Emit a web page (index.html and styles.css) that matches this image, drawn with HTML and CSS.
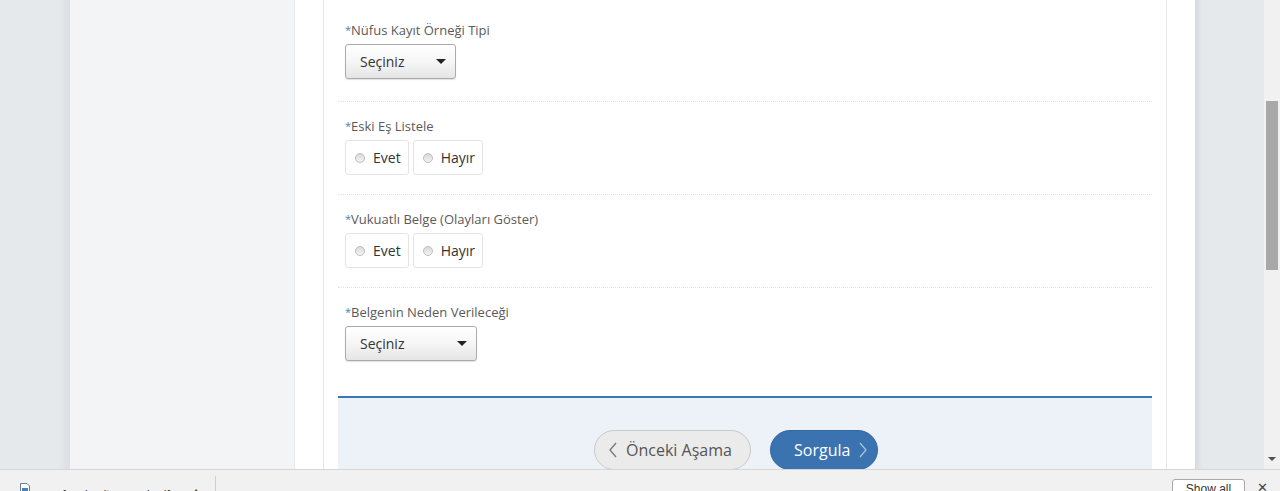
FILE: index.html
```html
<!DOCTYPE html>
<html lang="tr">
<head>
    <meta charset="UTF-8">
    <title>Nüfus Kayıt Örneği - Sorgulama</title>
    <link rel="stylesheet" href="styles.css">
</head>
<body>
    <div class="screen">
        <div class="viewport">
            <div class="page">
                <div class="gutter"></div>
                <div class="sidebar"></div>
                <div class="main">
                    <div class="card">
                        <div class="fields">
                            <div class="field">
                                <label class="field-label"><span class="req">*</span>Nüfus Kayıt Örneği Tipi</label>
                                <div class="select select-short">
                                    <span>Seçiniz</span>
                                    <span class="caret"></span>
                                </div>
                            </div>

                            <div class="field">
                                <label class="field-label"><span class="req">*</span>Eski Eş Listele</label>
                                <div class="radios">
                                    <label class="radio"><span class="dot"></span>Evet</label>
                                    <label class="radio"><span class="dot"></span>Hayır</label>
                                </div>
                            </div>

                            <div class="field">
                                <label class="field-label"><span class="req">*</span>Vukuatlı Belge (Olayları Göster)</label>
                                <div class="radios">
                                    <label class="radio"><span class="dot"></span>Evet</label>
                                    <label class="radio"><span class="dot"></span>Hayır</label>
                                </div>
                            </div>

                            <div class="field field-last">
                                <label class="field-label"><span class="req">*</span>Belgenin Neden Verileceği</label>
                                <div class="select select-long">
                                    <span>Seçiniz</span>
                                    <span class="caret"></span>
                                </div>
                            </div>
                        </div>

                        <div class="actions">
                            <button class="btn btn-back">
                                <svg width="10" height="16" viewBox="0 0 10 16"><path d="M8 1 L2 8 L8 15" fill="none" stroke="#777" stroke-width="1.3"/></svg>
                                Önceki Aşama
                            </button>
                            <button class="btn btn-go">
                                Sorgula
                                <svg width="10" height="16" viewBox="0 0 10 16"><path d="M2 1 L8 8 L2 15" fill="none" stroke="#a9c3e0" stroke-width="1.3"/></svg>
                            </button>
                        </div>
                    </div>
                </div>
                <div class="gutter-right"></div>
            </div>
            <div class="scrollbar">
                <div class="thumb"></div>
                <div class="arrow-down"></div>
            </div>
        </div>

        <div class="downloads">
            <div class="dl-item">
                <svg width="12" height="14" viewBox="0 0 12 14"><path d="M1.5 0.5 H8 L10.5 3 V13.5 H1.5 Z" fill="#fff" stroke="#6a7d99"/><rect x="3" y="5" width="6" height="4" fill="#4a7fc0"/></svg>
                <span class="dl-name">nufus_kayit_ornegi.pdf</span>
                <span class="dl-more">^</span>
            </div>
            <div class="dl-sep"></div>
            <div class="dl-spacer"></div>
            <button class="show-all">Show all</button>
            <span class="dl-close">✕</span>
        </div>
    </div>
</body>
</html>
```

FILE: styles.css
```css
html, body {
    margin: 0;
    padding: 0;
    overflow: hidden;
}
body {
    font-family: "Open Sans", Arial, sans-serif;
    color: #555;
}
.screen {
    width: 1280px;
    height: 491px;
    display: flex;
    flex-direction: column;
    overflow: hidden;
}
.viewport {
    height: 469px;
    flex-shrink: 0;
    display: flex;
    overflow: hidden;
}
.page {
    flex: 1;
    display: flex;
}
.gutter {
    width: 70px;
    background: linear-gradient(to right, #e6e9ec 0, #e6e9ec 58px, #dcdfe3 70px);
}
.sidebar {
    width: 224px;
    background-color: #f3f4f6;
    border-right: 1px solid #e9e9e9;
}
.main {
    width: 900px;
    background-color: #fff;
    padding: 0 28px;
    box-sizing: border-box;
}
.card {
    height: 100%;
    border-left: 1px solid #e6e6e6;
    border-right: 1px solid #e6e6e6;
    padding: 0 14px;
}
.gutter-right {
    flex: 1;
    background: linear-gradient(to right, #d6dadf 0, #e6e9ec 8px, #e6e9ec 100%);
}

.fields {
    padding-top: 6px;
}
.field {
    padding: 15px 7px 19px;
    border-bottom: 1px dotted #e2e2e2;
}
.field-last {
    border-bottom: none;
    padding-bottom: 32px;
}
.field-label {
    display: block;
    font-size: 13px;
    line-height: 18px;
    margin-bottom: 5px;
    color: #5a5a5a;
}
.req {
    color: #4d7fbf;
    font-size: 11px;
    vertical-align: 1px;
}

.select {
    height: 35px;
    box-sizing: border-box;
    display: flex;
    align-items: center;
    justify-content: space-between;
    padding: 0 9px 0 14px;
    font-size: 14px;
    color: #333;
    border: 1px solid #ababab;
    border-radius: 3px;
    background: linear-gradient(to bottom, #ffffff 0, #f6f6f6 50%, #e5e5e5 100%);
    box-shadow: 0 1px 1px rgba(0,0,0,0.12);
    margin-bottom: 3px;
}
.select-short {
    width: 111px;
}
.select-long {
    width: 132px;
}
.caret {
    width: 0;
    height: 0;
    border-left: 5px solid transparent;
    border-right: 5px solid transparent;
    border-top: 5px solid #222;
}

.radios {
    display: flex;
    gap: 4px;
}
.radio {
    height: 35px;
    box-sizing: border-box;
    display: flex;
    align-items: center;
    gap: 8px;
    padding: 0 7px 0 9px;
    border: 1px solid #e4e4e4;
    border-radius: 3px;
    background-color: #fff;
    font-size: 14px;
    color: #333;
}
.dot {
    width: 8px;
    height: 8px;
    border-radius: 50%;
    border: 1px solid #bdbdbd;
    background: linear-gradient(to bottom, #d8d8d8, #f4f4f4);
}

.actions {
    border-top: 2px solid #3b77b6;
    background-color: #edf2f9;
    height: 100px;
    display: flex;
    justify-content: center;
    align-items: flex-start;
    gap: 19px;
    padding: 32px 18px 0 0;
}
.btn {
    height: 40px;
    border-radius: 20px;
    font-family: "Open Sans", Arial, sans-serif;
    font-size: 16px;
    display: flex;
    align-items: center;
    gap: 8px;
    cursor: pointer;
}
.btn-back {
    width: 157px;
    padding: 0 0 0 13px;
    background-color: #ebebeb;
    border: 1px solid #c9c9c9;
    color: #555;
}
.btn-go {
    width: 108px;
    padding: 0 0 0 23px;
    background-color: #3a73b0;
    border: 1px solid #336aa4;
    color: #fff;
}

.scrollbar {
    width: 16px;
    background-color: #f1f1f1;
    position: relative;
}
.thumb {
    position: absolute;
    left: 2px;
    top: 101px;
    width: 12px;
    height: 169px;
    background-color: #a8a8a8;
}
.arrow-down {
    position: absolute;
    left: 4px;
    top: 457px;
    width: 0;
    height: 0;
    border-left: 4px solid transparent;
    border-right: 4px solid transparent;
    border-top: 4px solid #505050;
}

.downloads {
    height: 22px;
    flex-shrink: 0;
    overflow: hidden;
    background-color: #f1f1f1;
    border-top: 1px solid #d6d6d6;
    display: flex;
    align-items: flex-start;
    font-family: "Liberation Sans", Arial, sans-serif;
    font-size: 12px;
    color: #333;
}
.dl-item {
    width: 215px;
    flex-shrink: 0;
    display: flex;
    align-items: flex-start;
    gap: 18px;
    padding: 13px 0 0 19px;
    box-sizing: border-box;
}
.dl-name {
    margin-top: 5px;
}
.dl-more {
    margin-left: auto;
    margin-right: 16px;
    margin-top: 4px;
}
.dl-sep {
    width: 1px;
    height: 20px;
    margin-top: 6px;
    background-color: #cfcfcf;
}
.dl-spacer {
    flex: 1;
}
.show-all {
    margin-top: 9px;
    width: 73px;
    height: 24px;
    border: 1px solid #a9a9a9;
    border-radius: 3px;
    background-color: #fff;
    font-family: "Liberation Sans", Arial, sans-serif;
    font-size: 12px;
    color: #333;
    padding: 0;
    padding-bottom: 4px;
    flex-shrink: 0;
}
.dl-close {
    margin: 10px 12px 0 12px;
    font-size: 13px;
    color: #444;
}
```
